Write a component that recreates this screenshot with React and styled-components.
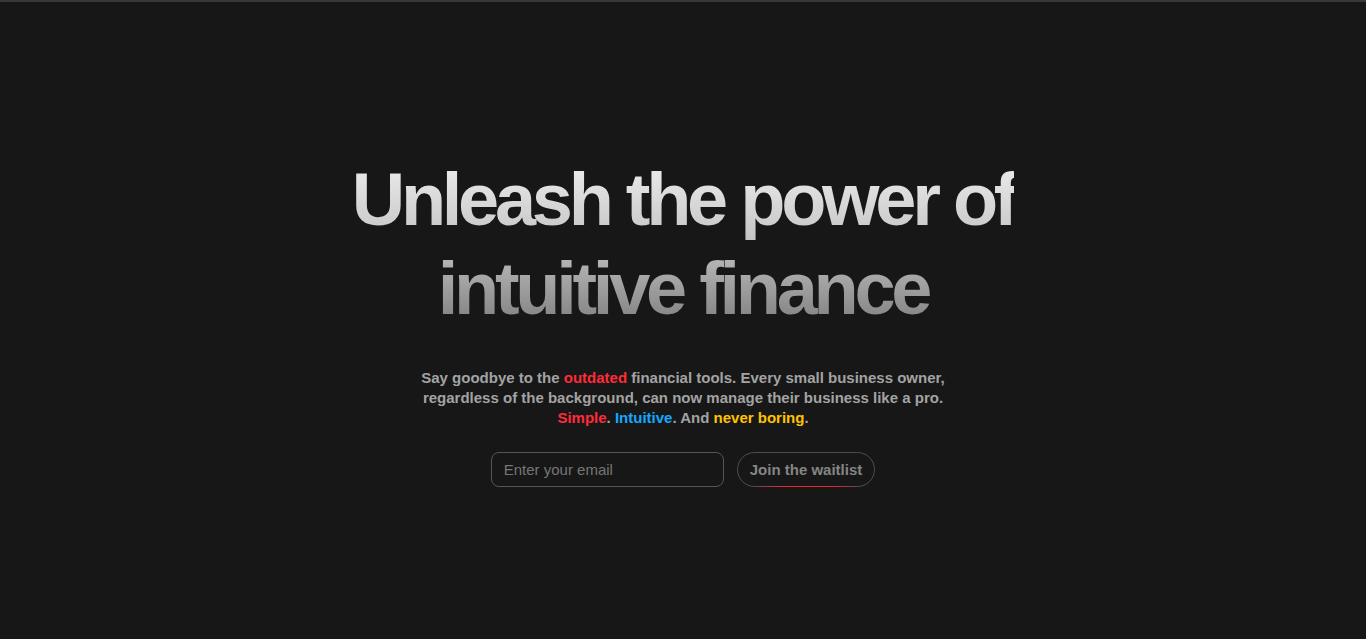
import React from 'react';
import styled, { createGlobalStyle } from 'styled-components';

const GlobalStyle = createGlobalStyle`
  html, body {
    margin: 0;
    padding: 0;
    background: #171717;
    font-family: "Liberation Sans", Arial, sans-serif;
  }
  * { box-sizing: border-box; }
`;

const TopBar = styled.div`
  height: 2px;
  background: #38383c;
`;

const Page = styled.main`
  min-height: calc(100vh - 2px);
  display: flex;
  flex-direction: column;
  align-items: center;
  justify-content: center;
  padding-top: 1px;
`;

const Title = styled.h1`
  margin: 0;
  font-size: 74px;
  line-height: 89px;
  font-weight: 700;
  letter-spacing: -0.058em;
  text-align: center;
  background: linear-gradient(180deg, #f0f0f0 0%, #c8c8c8 45%, #7a7a7a 100%);
  -webkit-background-clip: text;
  background-clip: text;
  color: transparent;
`;

const Lead = styled.p`
  margin: 35px 0 0;
  width: 540px;
  font-size: 15px;
  line-height: 20px;
  font-weight: 700;
  color: #a3a3a3;
  text-align: center;
`;

const Accent = styled.span`
  color: ${props => props.color};
`;

const Form = styled.form`
  margin-top: 24px;
  display: flex;
  gap: 13px;
`;

const EmailInput = styled.input`
  width: 233px;
  height: 35px;
  padding: 0 12px;
  border: 1px solid #555;
  border-radius: 8px;
  background: transparent;
  color: #ccc;
  font-family: "Liberation Sans", Arial, sans-serif;
  font-size: 15px;
  outline: none;

  &::placeholder {
    color: #767676;
  }
`;

const JoinButton = styled.button`
  position: relative;
  height: 35px;
  padding: 0 12px;
  border: 1px solid #4e4e4e;
  border-radius: 999px;
  background: transparent;
  color: #858585;
  font-family: "Liberation Sans", Arial, sans-serif;
  font-size: 15px;
  font-weight: 700;
  cursor: pointer;

  &::after {
    content: '';
    position: absolute;
    left: 12px;
    right: 12px;
    bottom: -1px;
    height: 1px;
    background: linear-gradient(90deg, transparent, #f0262f 30%, #f0262f 70%, transparent);
  }
`;

export default function App() {
  return (
    <>
      <GlobalStyle />
      <TopBar />
      <Page>
        <Title>
          Unleash the power of
          <br />
          intuitive finance
        </Title>
        <Lead>
          Say goodbye to the <Accent color="#ff2b3a">outdated</Accent> financial tools. Every small business owner,
          regardless of the background, can now manage their business like a pro.{' '}
          <Accent color="#ff2b3a">Simple</Accent>. <Accent color="#14a8ff">Intuitive</Accent>. And{' '}
          <Accent color="#ffc300">never boring</Accent>.
        </Lead>
        <Form onSubmit={e => e.preventDefault()}>
          <EmailInput type="email" placeholder="Enter your email" />
          <JoinButton type="submit">Join the waitlist</JoinButton>
        </Form>
      </Page>
    </>
  );
}
